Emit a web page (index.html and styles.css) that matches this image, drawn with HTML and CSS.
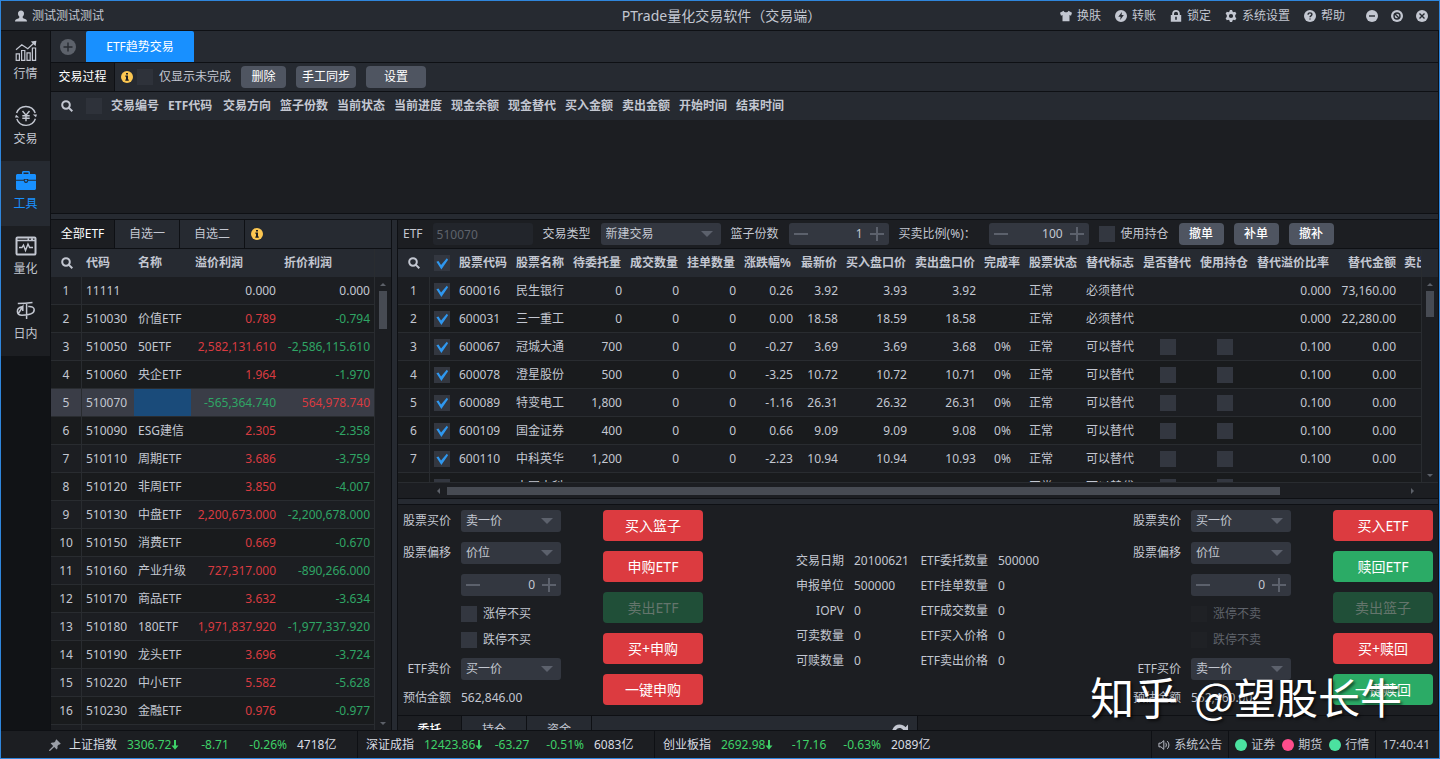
FILE: index.html
```html
<!DOCTYPE html>
<html lang="zh-CN">
<head>
<meta charset="utf-8">
<title>PTrade量化交易软件（交易端）</title>
<link rel="stylesheet" href="styles.css">
</head>
<body>
<svg class="defs" aria-hidden="true">
  <symbol id="i-user" viewBox="0 0 12 12"><path d="M6 .4c1.900 0 3 1.300 3 3.100 0 1.300-.5 2.400-1.300 3v1c0 .5.4.8 1 1 2 .6 3.300 1 3.300 2.900H0c0-1.900 1.300-2.300 3.300-2.900.6-.2 1-.5 1-1v-1C3.500 5.900 3 4.800 3 3.500 3 1.700 4.100.4 6 .4z"/></symbol>
  <symbol id="i-shirt" viewBox="0 0 12 12"><path d="M3.600.8 0 2.700l1 3 1.500-.6v6.100h7V5.100l1.500.6 1-3L8.400.8C8 1.800 7.200 2.300 6 2.300S4 1.800 3.600.8z"/></symbol>
  <symbol id="i-transfer" viewBox="0 0 12 12"><path fill-rule="evenodd" d="M6 0a6 6 0 1 0 0 12A6 6 0 0 0 6 0zm.9 2L6.600 5.100h2.200L5.200 10l.4-3.300H3.300z"/></symbol>
  <symbol id="i-lock" viewBox="0 0 12 12"><path fill-rule="evenodd" d="M2.200 5V3.800a3.800 3.800 0 0 1 7.600 0V5h1.400v6.800H.8V5zm1.800 0h4V3.800a2 2 0 0 0-4 0zm1.200 1.700v3h1.600v-3z"/></symbol>
  <symbol id="i-gear" viewBox="0 0 12 12"><path fill-rule="evenodd" d="M4.900 0h2.200l.4 1.600 1 .6 1.700-.5 1.200 2-1.200 1.200v2.200l1.200 1.200-1.200 2-1.700-.5-1 .6L7.100 12H4.900l-.4-1.600-1-.6-1.700.5-1.200-2 1.200-1.200V4.900L.6 3.700l1.200-2 1.700.5 1-.6zM6 3.900a2.100 2.100 0 1 0 0 4.200 2.100 2.100 0 0 0 0-4.200z"/></symbol>
  <symbol id="i-help" viewBox="0 0 12 12"><circle cx="6" cy="6" r="6"/><path class="cut" d="M4.100 4.700c0-1.200.8-1.800 1.900-1.800s1.900.7 1.900 1.700C7.900 5.900 6 5.900 6 7.200M6 8.400v1.200"/></symbol>
  <symbol id="i-min" viewBox="0 0 12 12"><circle cx="6" cy="6" r="6"/><path class="cut" d="M3 6h6"/></symbol>
  <symbol id="i-max" viewBox="0 0 12 12"><circle cx="6" cy="6" r="6"/><circle class="cut" cx="6" cy="6" r="3"/><path class="cut" d="m4 4 4 4"/></symbol>
  <symbol id="i-close" viewBox="0 0 12 12"><circle cx="6" cy="6" r="6"/><path class="cut" d="m3.500 3.500 5 5m0-5-5 5"/></symbol>
  <symbol id="i-search" viewBox="0 0 12 12"><path class="line" stroke-width="2" d="M5 1.200a3.800 3.800 0 1 1 0 7.600 3.800 3.800 0 0 1 0-7.600zm2.900 6.700 3.400 3.400"/></symbol>
  <symbol id="i-info" viewBox="0 0 12 12"><circle cx="6" cy="6" r="6"/><path class="ink" d="M5 2h2v1.600H5zM4.300 4.600H7V8.600h.8v1.200H4.300V8.600H5V5.800h-.7z"/></symbol>
  <symbol id="i-plus" viewBox="0 0 16 16"><circle cx="8" cy="8" r="8"/><path class="cut" stroke-width="2.600" d="M8 3.500v9M3.500 8h9"/></symbol>
  <symbol id="i-pin" viewBox="0 0 12 12"><path d="m7.300.2 4.500 4.500-1.200.8-.7-.1-1.500 1.500c.4 1.500.2 2.700-.7 3.500L5.200 7.900 1 11.900l-.9.1.1-.9 4-4.200L1.600 4.300c.8-.9 2-1.100 3.500-.7l1.500-1.500-.1-.7z"/></symbol>
  <symbol id="i-sound" viewBox="0 0 13 12"><path class="line" d="M1 4h2.200L6.300 1.300v9.400L3.200 8H1zM8.200 3.600c1.100 1.300 1.100 3.500 0 4.800M10 1.800c2.400 2.300 2.400 6.100 0 8.400"/></symbol>
  <symbol id="i-redo" viewBox="0 0 18 14"><path d="M0 12C1 5 4 1.500 8.500 1.500c2.500 0 4.500 1 6 2.700L17 1.500V9H9.500L12 6.600c-1-1.100-2.200-1.700-3.600-1.700C5.800 4.900 4 7.500 3.500 12z"/></symbol>
  <symbol id="i-down" viewBox="0 0 8 10"><path d="M3 0h2v5.500h2.500L4 9.800.5 5.500H3z"/></symbol>
  <symbol id="i-chart" viewBox="0 0 22 22"><path class="line" stroke-width="1.200" d="M1.200 20.300v-6.500h3.200v6.500zM6.600 20.300V10.500h3.200v9.800zM12 20.300v-7.500h3.200v7.500zM17.400 20.300V8h3.200v12.300zM1 9.800l5.800-5 6 4L19.500 2.500"/><path d="m15.800 1.400 5.600-.6-.8 5.400z"/></symbol>
  <symbol id="i-trade" viewBox="0 0 22 22"><path class="line" stroke-width="1.400" d="M1.600 8A9.900 9.900 0 0 1 20.200 8M20.400 13.800A9.900 9.900 0 0 1 1.800 14M7.500 6l3.500 4.200L14.500 6M11 10.200v6M7.300 10.800h7.400M7.300 13.300h7.400"/><path d="M17.800 9.400H22l-1 2.800zM4.200 12.600H0l1-2.800z"/></symbol>
  <symbol id="i-tools" viewBox="0 0 22 22"><path fill-rule="evenodd" d="M7 4V2.600C7 1.700 7.600 1 8.500 1h5c.9 0 1.500.7 1.500 1.600V4h4.500c.8 0 1.500.7 1.500 1.500V9.800h-7.800V9H8.800v.8H1V5.500C1 4.700 1.700 4 2.500 4zm1.500 0h5V2.400h-5zM1 10.700h7.800c.2 1.500 1 2.200 2.200 2.200s2-.7 2.200-2.200H21v7.800c0 .8-.7 1.500-1.500 1.500h-17c-.8 0-1.500-.7-1.500-1.500zM9.800 9.800h2.400v1.700H9.800z"/></symbol>
  <symbol id="i-quant" viewBox="0 0 22 22"><path class="line" stroke-width="2" d="M2.500 2.500h17c.6 0 1 .4 1 1v15c0 .6-.4 1-1 1h-17c-.6 0-1-.4-1-1v-15c0-.6.4-1 1-1z"/><path class="line" stroke-width="1.400" d="M1.500 5.500h19M4 12.500h3l1.500-2.500 2 5.500 2.500-6.500 1.600 3.500H18M12.500 4h1.500M16 4h2"/></symbol>
  <symbol id="i-intra" viewBox="0 0 22 22"><path class="line" stroke-width="1.500" d="M2.800 3.600C8 3.600 13 3.200 17.500 2.600M11.600 3.500V19M7.800 6.500C4 7 2.200 9 2.400 11.600c.2 2.400 2 3.600 4.600 3.600 6 0 12.200-1.200 12.200-5.400 0-2.300-2.400-3.600-6-3.300M3 14l4.800-7.500v4.600M7.800 6.500 4 8"/></symbol>
</svg>

<div class="window">
  <header class="titlebar">
    <div class="user"><svg class="ic"><use href="#i-user"/></svg>测试测试测试</div>
    <h1 class="app-title">PTrade量化交易软件（交易端）</h1>
    <div class="title-right">
      <button class="tbtn"><svg class="ic"><use href="#i-shirt"/></svg>换肤</button>
      <button class="tbtn"><svg class="ic"><use href="#i-transfer"/></svg>转账</button>
      <button class="tbtn"><svg class="ic"><use href="#i-lock"/></svg>锁定</button>
      <button class="tbtn"><svg class="ic"><use href="#i-gear"/></svg>系统设置</button>
      <button class="tbtn"><svg class="ic"><use href="#i-help"/></svg>帮助</button>
      <div class="winctl">
        <button class="tbtn" aria-label="最小化"><svg class="ic"><use href="#i-min"/></svg></button>
        <button class="tbtn" aria-label="还原"><svg class="ic"><use href="#i-max"/></svg></button>
        <button class="tbtn" aria-label="关闭"><svg class="ic"><use href="#i-close"/></svg></button>
      </div>
    </div>
  </header>

  <div class="body">
    <nav class="side">
      <a class="nav" href="#"><svg><use href="#i-chart"/></svg>行情</a>
      <a class="nav" href="#"><svg><use href="#i-trade"/></svg>交易</a>
      <a class="nav on" href="#"><svg><use href="#i-tools"/></svg>工具</a>
      <a class="nav" href="#"><svg><use href="#i-quant"/></svg>量化</a>
      <a class="nav" href="#"><svg><use href="#i-intra"/></svg>日内</a>
    </nav>

    <main class="main">
      <div class="doctabs">
        <button class="add" aria-label="新增"><svg><use href="#i-plus"/></svg></button>
        <button class="doctab">ETF趋势交易</button>
      </div>
      <div class="toolbar">
        <button class="tab on">交易过程</button>
        <svg class="ic info"><use href="#i-info"/></svg>
        <label class="check faint"><input type="checkbox">仅显示未完成</label>
        <button class="btn">删除</button>
        <button class="btn wide">手工同步</button>
        <button class="btn wide">设置</button>
      </div>
      <div class="process">
        <table class="grid">
          <colgroup><col class="w31"><col class="w25"><col class="w57"><col class="w55"><col class="w57"><col class="w57"><col class="w57"><col class="w57"><col class="w57"><col class="w57"><col class="w57"><col class="w57"><col class="w57"><col></colgroup>
          <thead><tr><th class="c"><svg class="ic"><use href="#i-search"/></svg></th><th class="faint"><input type="checkbox" aria-label="全选"></th><th>交易编号</th><th>ETF代码</th><th>交易方向</th><th>篮子份数</th><th>当前状态</th><th>当前进度</th><th>现金余额</th><th>现金替代</th><th>买入金额</th><th>卖出金额</th><th>开始时间</th><th>结束时间</th></tr></thead>
        </table>
      </div>
      <div class="hsplit"></div>

      <div class="lower">
        <section class="etfs">
          <div class="tabs">
            <button class="tab on">全部ETF</button><button class="tab">自选一</button><button class="tab">自选二</button>
            <svg class="ic info"><use href="#i-info"/></svg>
          </div>
          <div class="scrollbox">
            <table class="grid">
              <colgroup><col class="w31"><col class="w52"><col class="w57"><col class="w89"><col></colgroup>
              <thead><tr><th class="c"><svg class="ic"><use href="#i-search"/></svg></th><th>代码</th><th>名称</th><th>溢价利润</th><th>折价利润</th></tr></thead>
              <tbody>
              <tr><td>1</td><td>11111</td><td></td><td class="r">0.000</td><td class="r">0.000</td></tr>
              <tr><td>2</td><td>510030</td><td>价值ETF</td><td class="r up">0.789</td><td class="r dn">-0.794</td></tr>
              <tr><td>3</td><td>510050</td><td>50ETF</td><td class="r up">2,582,131.610</td><td class="r dn">-2,586,115.610</td></tr>
              <tr><td>4</td><td>510060</td><td>央企ETF</td><td class="r up">1.964</td><td class="r dn">-1.970</td></tr>
              <tr class="sel"><td>5</td><td>510070</td><td class="focus"></td><td class="r dn">-565,364.740</td><td class="r up">564,978.740</td></tr>
              <tr><td>6</td><td>510090</td><td>ESG建信</td><td class="r up">2.305</td><td class="r dn">-2.358</td></tr>
              <tr><td>7</td><td>510110</td><td>周期ETF</td><td class="r up">3.686</td><td class="r dn">-3.759</td></tr>
              <tr><td>8</td><td>510120</td><td>非周ETF</td><td class="r up">3.850</td><td class="r dn">-4.007</td></tr>
              <tr><td>9</td><td>510130</td><td>中盘ETF</td><td class="r up">2,200,673.000</td><td class="r dn">-2,200,678.000</td></tr>
              <tr><td>10</td><td>510150</td><td>消费ETF</td><td class="r up">0.669</td><td class="r dn">-0.670</td></tr>
              <tr><td>11</td><td>510160</td><td>产业升级</td><td class="r up">727,317.000</td><td class="r dn">-890,266.000</td></tr>
              <tr><td>12</td><td>510170</td><td>商品ETF</td><td class="r up">3.632</td><td class="r dn">-3.634</td></tr>
              <tr><td>13</td><td>510180</td><td>180ETF</td><td class="r up">1,971,837.920</td><td class="r dn">-1,977,337.920</td></tr>
              <tr><td>14</td><td>510190</td><td>龙头ETF</td><td class="r up">3.696</td><td class="r dn">-3.724</td></tr>
              <tr><td>15</td><td>510220</td><td>中小ETF</td><td class="r up">5.582</td><td class="r dn">-5.628</td></tr>
              <tr><td>16</td><td>510230</td><td>金融ETF</td><td class="r up">0.976</td><td class="r dn">-0.977</td></tr>
              <tr><td></td><td></td><td></td><td></td><td></td></tr>
              </tbody>
            </table>
            <div class="vbar"><div class="cap"></div><i class="tri t-up"></i><div class="thumb tall"></div><i class="tri t-down"></i></div>
          </div>
        </section>
        <div class="vsplit"></div>

        <section class="trade">
          <form class="params">
            <label for="etf">ETF</label><input class="text dim" id="etf" value="510070" disabled>
            <label for="kind">交易类型</label><span class="pick mid"><select id="kind"><option>新建交易</option></select></span>
            <label for="lots">篮子份数</label><span class="spin"><button type="button" class="minus" aria-label="减"></button><input id="lots" value="1"><button type="button" class="add-one" aria-label="加"></button></span>
            <label for="ratio" class="w80">买卖比例(%)：</label><span class="spin"><button type="button" class="minus" aria-label="减"></button><input id="ratio" value="100"><button type="button" class="add-one" aria-label="加"></button></span>
            <label class="check"><input type="checkbox">使用持仓</label>
            <button type="button" class="btn">撤单</button><button type="button" class="btn">补单</button><button type="button" class="btn">撤补</button>
          </form>

          <div class="scrollbox">
            <table class="grid">
              <colgroup><col class="w32"><col class="w25"><col class="w57"><col class="w57"><col class="w57"><col class="w57"><col class="w57"><col class="w57"><col class="w45"><col class="w69"><col class="w69"><col class="w45"><col class="w57"><col class="w57"><col class="w57"><col class="w57"><col class="w82"><col class="w65"><col></colgroup>
              <thead><tr><th class="c"><svg class="ic"><use href="#i-search"/></svg></th><th><input type="checkbox" checked aria-label="全选"></th><th>股票代码</th><th>股票名称</th><th>待委托量</th><th>成交数量</th><th>挂单数量</th><th>涨跌幅%</th><th>最新价</th><th>买入盘口价</th><th>卖出盘口价</th><th>完成率</th><th>股票状态</th><th>替代标志</th><th>是否替代</th><th>使用持仓</th><th>替代溢价比率</th><th class="r">替代金额</th><th>卖出数量</th></tr></thead>
              <tbody>
              <tr><td>1</td><td><input type="checkbox" checked aria-label="选择"></td><td>600016</td><td>民生银行</td><td class="r">0</td><td class="r">0</td><td class="r">0</td><td class="r">0.26</td><td class="r">3.92</td><td class="r">3.93</td><td class="r">3.92</td><td></td><td>正常</td><td>必须替代</td><td></td><td></td><td class="r">0.000</td><td class="r">73,160.00</td><td></td></tr>
              <tr><td>2</td><td><input type="checkbox" checked aria-label="选择"></td><td>600031</td><td>三一重工</td><td class="r">0</td><td class="r">0</td><td class="r">0</td><td class="r">0.00</td><td class="r">18.58</td><td class="r">18.59</td><td class="r">18.58</td><td></td><td>正常</td><td>必须替代</td><td></td><td></td><td class="r">0.000</td><td class="r">22,280.00</td><td></td></tr>
              <tr><td>3</td><td><input type="checkbox" checked aria-label="选择"></td><td>600067</td><td>冠城大通</td><td class="r">700</td><td class="r">0</td><td class="r">0</td><td class="r">-0.27</td><td class="r">3.69</td><td class="r">3.69</td><td class="r">3.68</td><td class="c">0%</td><td>正常</td><td>可以替代</td><td class="c"><input type="checkbox" aria-label="是否替代"></td><td class="c"><input type="checkbox" aria-label="使用持仓"></td><td class="r">0.100</td><td class="r">0.00</td><td></td></tr>
              <tr><td>4</td><td><input type="checkbox" checked aria-label="选择"></td><td>600078</td><td>澄星股份</td><td class="r">500</td><td class="r">0</td><td class="r">0</td><td class="r">-3.25</td><td class="r">10.72</td><td class="r">10.72</td><td class="r">10.71</td><td class="c">0%</td><td>正常</td><td>可以替代</td><td class="c"><input type="checkbox" aria-label="是否替代"></td><td class="c"><input type="checkbox" aria-label="使用持仓"></td><td class="r">0.100</td><td class="r">0.00</td><td></td></tr>
              <tr><td>5</td><td><input type="checkbox" checked aria-label="选择"></td><td>600089</td><td>特变电工</td><td class="r">1,800</td><td class="r">0</td><td class="r">0</td><td class="r">-1.16</td><td class="r">26.31</td><td class="r">26.32</td><td class="r">26.31</td><td class="c">0%</td><td>正常</td><td>可以替代</td><td class="c"><input type="checkbox" aria-label="是否替代"></td><td class="c"><input type="checkbox" aria-label="使用持仓"></td><td class="r">0.100</td><td class="r">0.00</td><td></td></tr>
              <tr><td>6</td><td><input type="checkbox" checked aria-label="选择"></td><td>600109</td><td>国金证券</td><td class="r">400</td><td class="r">0</td><td class="r">0</td><td class="r">0.66</td><td class="r">9.09</td><td class="r">9.09</td><td class="r">9.08</td><td class="c">0%</td><td>正常</td><td>可以替代</td><td class="c"><input type="checkbox" aria-label="是否替代"></td><td class="c"><input type="checkbox" aria-label="使用持仓"></td><td class="r">0.100</td><td class="r">0.00</td><td></td></tr>
              <tr><td>7</td><td><input type="checkbox" checked aria-label="选择"></td><td>600110</td><td>中科英华</td><td class="r">1,200</td><td class="r">0</td><td class="r">0</td><td class="r">-2.23</td><td class="r">10.94</td><td class="r">10.94</td><td class="r">10.93</td><td class="c">0%</td><td>正常</td><td>可以替代</td><td class="c"><input type="checkbox" aria-label="是否替代"></td><td class="c"><input type="checkbox" aria-label="使用持仓"></td><td class="r">0.100</td><td class="r">0.00</td><td></td></tr>
              <tr><td></td><td><input type="checkbox" aria-label="选择"></td><td></td><td>中国中科</td><td></td><td></td><td></td><td></td><td></td><td></td><td></td><td></td><td>正常</td><td>可以替代</td><td class="c"><input type="checkbox" aria-label="是否替代"></td><td class="c"><input type="checkbox" aria-label="使用持仓"></td><td></td><td></td><td></td></tr>
              </tbody>
            </table>
            <div class="vbar"><div class="cap"></div><i class="tri t-up"></i><div class="thumb short"></div><i class="tri t-down"></i></div>
          </div>
          <div class="hbar"><i class="tri t-left"></i><div class="track"><div class="hthumb"></div></div><i class="tri t-right"></i></div>
          <div class="hsplit"></div>

          <div class="order">
            <form class="side-form">
              <div class="fields">
                <label for="b1">股票买价</label><span class="pick"><select id="b1"><option>卖一价</option></select></span>
                <label for="b2">股票偏移</label><span class="pick"><select id="b2"><option>价位</option></select></span>
                <span class="spin c2"><button type="button" class="minus" aria-label="减"></button><input aria-label="偏移" value="0"><button type="button" class="add-one" aria-label="加"></button></span>
                <label class="check c2"><input type="checkbox">涨停不买</label>
                <label class="check c2"><input type="checkbox">跌停不买</label>
                <label for="b3">ETF卖价</label><span class="pick"><select id="b3"><option>买一价</option></select></span>
                <span class="lab">预估金额</span><output>562,846.00</output>
              </div>
              <div class="acts">
                <button type="button" class="act red">买入篮子</button>
                <button type="button" class="act red">申购ETF</button>
                <button type="button" class="act green" disabled>卖出ETF</button>
                <button type="button" class="act red">买+申购</button>
                <button type="button" class="act red">一键申购</button>
              </div>
            </form>
            <dl class="facts">
              <dt>交易日期</dt><dd>20100621</dd><dt>ETF委托数量</dt><dd>500000</dd>
              <dt>申报单位</dt><dd>500000</dd><dt>ETF挂单数量</dt><dd>0</dd>
              <dt>IOPV</dt><dd>0</dd><dt>ETF成交数量</dt><dd>0</dd>
              <dt>可卖数量</dt><dd>0</dd><dt>ETF买入价格</dt><dd>0</dd>
              <dt>可赎数量</dt><dd>0</dd><dt>ETF卖出价格</dt><dd>0</dd>
            </dl>
            <form class="side-form">
              <div class="fields">
                <label for="s1">股票卖价</label><span class="pick"><select id="s1"><option>买一价</option></select></span>
                <label for="s2">股票偏移</label><span class="pick"><select id="s2"><option>价位</option></select></span>
                <span class="spin c2"><button type="button" class="minus" aria-label="减"></button><input aria-label="偏移" value="0"><button type="button" class="add-one" aria-label="加"></button></span>
                <label class="check c2 off"><input type="checkbox" disabled>涨停不卖</label>
                <label class="check c2 off"><input type="checkbox" disabled>跌停不卖</label>
                <label for="s3">ETF买价</label><span class="pick"><select id="s3"><option>卖一价</option></select></span>
                <span class="lab">预估金额</span><output>562,460.00</output>
              </div>
              <div class="acts">
                <button type="button" class="act red">买入ETF</button>
                <button type="button" class="act green">赎回ETF</button>
                <button type="button" class="act green" disabled>卖出篮子</button>
                <button type="button" class="act red">买+赎回</button>
                <button type="button" class="act green">一键赎回</button>
              </div>
            </form>
          </div>
          <div class="peek">
            <div class="tabs half">
              <button class="tab on">委托</button><button class="tab">持仓</button><button class="tab">资金</button>
              <svg class="redo"><use href="#i-redo"/></svg>
            </div>
          </div>
        </section>
      </div>
    </main>
  </div>

  <footer class="status">
    <svg class="ic pin"><use href="#i-pin"/></svg>
    <div class="quote"><span>上证指数</span><b>3306.72<svg><use href="#i-down"/></svg></b><b class="mid">-8.71</b><b class="end">-0.26%</b><span>4718亿</span></div>
    <div class="quote"><span>深证成指</span><b>12423.86<svg><use href="#i-down"/></svg></b><b class="mid">-63.27</b><b class="end">-0.51%</b><span>6083亿</span></div>
    <div class="quote"><span>创业板指</span><b>2692.98<svg><use href="#i-down"/></svg></b><b class="mid">-17.16</b><b class="end">-0.63%</b><span>2089亿</span></div>
    <div class="links">
      <div class="cell"><svg class="ic"><use href="#i-sound"/></svg>系统公告</div>
      <div class="cell"><i class="dot"></i>证券<i class="dot pink"></i>期货<i class="dot"></i>行情</div>
      <div class="cell"><time>17:40:41</time></div>
    </div>
  </footer>
  <div class="watermark"><span class="brand">知乎</span><span>@望股长牛</span></div>
</div>
</body>
</html>
```
FILE: styles.css
```css
:root {
  --bg: #1c1e22;
  --panel: #262a31;
  --edge: #0e1014;
  --line: #292c30;
  --field: #333740;
  --text: #c3c7d1;
  --up: #d93b41;
  --down: #2fa565;
}
* { box-sizing: border-box; }
body {
  margin: 0;
  background: var(--bg);
  color: var(--text);
  font: 12px/18px "Noto Sans", "Noto Sans CJK SC", sans-serif;
}
button, input, select { font: inherit; color: inherit; border: 0; margin: 0; padding: 0; background: none; border-radius: 0; }
a { color: inherit; text-decoration: none; }
.defs { position: absolute; width: 0; height: 0; }
svg { fill: currentColor; flex: none; display: block; }
.ic { width: 12px; height: 12px; }
.cut { fill: none; stroke: var(--panel); stroke-width: 1.4; }
.line { fill: none; stroke: currentColor; }
.ink { fill: #1c1e22; }
.info { color: #fcc751; margin-left: 6px; }

.window {
  position: relative;
  height: 100vh;
  display: flex;
  flex-direction: column;
  border: 1px solid #2f86dc;
  overflow: hidden;
}

/* title bar */
.titlebar {
  display: grid;
  grid-template-columns: 1fr auto 1fr;
  align-items: center;
  height: 30px;
  padding: 1px 11px 0 14px;
  background: var(--panel);
  border-bottom: 1px solid var(--edge);
}
.user, .tbtn { display: flex; align-items: center; gap: 5px; }
.app-title { margin: 0; font-size: 14px; font-weight: 400; }
.title-right { display: flex; justify-content: flex-end; gap: 14px; }
.winctl { display: flex; gap: 13px; margin-left: 7px; }

.body { flex: 1; min-height: 0; display: flex; }

/* side navigation */
.side { width: 50px; background: #111316; border-right: 1px solid var(--edge); }
.nav {
  display: flex;
  flex-direction: column;
  align-items: center;
  gap: 3px;
  height: 65px;
  padding-top: 9px;
  background: var(--bg);
}
.nav svg { width: 22px; height: 22px; }
.nav.on { background: var(--panel); color: #1890ff; }

.main { flex: 1; min-width: 0; display: flex; flex-direction: column; border-right: 1px solid var(--edge); }
.doctabs { display: flex; height: 32px; background: var(--panel); border-bottom: 1px solid var(--edge); }
.add { width: 35px; color: #5d626b; display: flex; align-items: center; padding-left: 9px; }
.add svg { width: 16px; height: 16px; }
.doctab { width: 108px; background: #1890ff; color: #fff; border-radius: 2px 2px 0 0; }

.toolbar, .tabs { display: flex; align-items: center; height: 29px; background: var(--panel); border-bottom: 1px solid var(--edge); }
.tab { width: 65px; height: 28px; flex: none; border-right: 1px solid var(--edge); }
.tab.on { width: 64px; background: var(--bg); color: #fff; }
.btn { width: 45px; height: 22px; border-radius: 4px; background: #4f5561; color: #fff; }
.btn.wide { width: 60px; }
.toolbar .btn { margin-left: 10px; }
.toolbar .check { margin-left: 4px; }
.params .btn, .half .on { font-weight: 500; }

.check { display: flex; align-items: center; gap: 6px; white-space: nowrap; }
input[type="checkbox"] {
  appearance: none;
  display: block;
  width: 16px;
  height: 16px;
  background: var(--field);
}
.faint input[type="checkbox"] { background: #2e323a; }
input[type="checkbox"]:disabled { background: #1f2125; }
input[type="checkbox"]:checked::before {
  content: "";
  display: block;
  height: 16px;
  background: #2f97ee;
  clip-path: polygon(15% 42%, 28% 38%, 44% 62%, 80% 20%, 88% 30%, 46% 90%);
}
.off { color: #5f636b; }

/* data grids */
.grid { width: 100%; table-layout: fixed; border-collapse: separate; border-spacing: 0; }
.grid th, .grid td { height: 28px; padding: 0 4px; text-align: left; white-space: nowrap; overflow: hidden; }
.grid th { background: var(--panel); font-weight: 700; }
.grid td { border-bottom: 1px solid var(--line); }
.grid td:first-child { text-align: center; border-right: 1px solid var(--line); padding: 0; }
.grid tbody tr:nth-child(even) { background: #191b1d; }
.grid tbody tr:nth-child(odd) { background: var(--bg); }
.grid .r { text-align: right; }
.grid .c { text-align: center; }
.grid .c svg, .grid .c input { margin: 0 auto; }
.grid tbody tr.sel { background: #3a3d47; }
.grid .focus { background: #1a4b7a; }
.up { color: var(--up); }
.dn { color: var(--down); }
.w25 { width: 25px; } .w31 { width: 31px; } .w32 { width: 32px; } .w45 { width: 45px; }
.w52 { width: 52px; } .w55 { width: 55px; } .w57 { width: 57px; } .w65 { width: 65px; }
.w69 { width: 69px; } .w82 { width: 82px; } .w89 { width: 89px; }

.process { height: 121px; }
.hsplit { height: 7px; flex: none; background: var(--panel); border: solid var(--edge); border-width: 1px 0; }
.vsplit { width: 7px; flex: none; background: var(--panel); border: solid var(--edge); border-width: 0 1px; }
.lower { flex: 1; min-height: 0; display: flex; }
.etfs { width: 340px; display: flex; flex-direction: column; }
.trade { flex: 1; min-width: 0; display: flex; flex-direction: column; }
.scrollbox { flex: 1; min-height: 0; display: flex; align-items: flex-start; overflow: hidden; }
.scrollbox .grid { flex: 1; min-width: 0; }

/* scroll bars */
.vbar { width: 17px; flex: none; align-self: stretch; display: flex; flex-direction: column; align-items: center; padding-bottom: 5px; border-left: 1px solid var(--line); }
.cap { width: 17px; height: 28px; background: var(--panel); flex: none; }
.thumb { width: 8px; background: #474b53; margin-top: 5px; }
.tall { height: 38px; }
.short { height: 26px; }
.tri { flex: none; border: 3px solid transparent; }
.t-up { border-bottom-color: #5c6068; margin-top: 6px; border-top-width: 0; }
.t-down { border-top-color: #5c6068; border-bottom-width: 0; margin-top: auto; }
.t-left { border-right-color: #5c6068; border-left-width: 0; }
.t-right { border-left-color: #5c6068; border-right-width: 0; }
.hbar { display: flex; align-items: center; height: 16px; flex: none; gap: 7px; padding: 0 24px 0 39px; border-top: 1px solid var(--line); }
.track { flex: 1; }
.hthumb { width: 87%; height: 8px; background: #474b53; }

/* form controls */
.params { display: flex; align-items: center; gap: 10px; height: 29px; padding: 0 5px; border-bottom: 1px solid var(--edge); white-space: nowrap; }
.w80 { width: 80px; }
.text, .spin { width: 100px; height: 22px; background: var(--field); border-radius: 3px; }
.dim { background: #22252b; color: #5f636b; padding: 0 4px; }
.pick { position: relative; width: 100px; height: 22px; }
.pick.mid { width: 120px; }
.pick select { appearance: none; width: 100%; height: 22px; padding: 0 5px; background: var(--field); border-radius: 3px; }
.pick::after { content: ""; position: absolute; right: 8px; top: 8px; border: 6px solid transparent; border-top-color: #5c616c; border-bottom-width: 0; pointer-events: none; }
.spin { display: flex; align-items: center; padding: 0 5px; }
.spin input { flex: 1; min-width: 0; text-align: right; padding-right: 7px; }
.minus, .add-one { width: 14px; height: 14px; flex: none; background: linear-gradient(#5c616c, #5c616c) center / 14px 2px no-repeat; }
.add-one { background: linear-gradient(#5c616c, #5c616c) center / 14px 2px no-repeat, linear-gradient(#5c616c, #5c616c) center / 2px 14px no-repeat; }

.order { display: flex; flex: none; justify-content: space-between; padding: 5px 5px 9px; height: 210px; }
.side-form { display: flex; gap: 42px; }
.fields { display: grid; grid-template-columns: 48px 100px; grid-template-rows: 22px 22px 22px 16px 16px 22px 16px; gap: 10px; align-items: center; }
.fields > label:not(.check), .lab { text-align: right; white-space: nowrap; }
.c2 { grid-column: 2; }
.acts { display: flex; flex-direction: column; gap: 10px; }
.act { width: 100px; height: 31px; border-radius: 4px; font-size: 14px; color: #fff; }
.red { background: #dc3b40; }
.green { background: #2bab66; }
.green:disabled { background: #204f38; color: #64756c; }
.facts { display: grid; grid-template-columns: 48px 56px 68px 42px; column-gap: 10px; margin: 0; padding-top: 38px; line-height: 25px; grid-auto-rows: 25px; white-space: nowrap; }
.facts dt { text-align: right; }
.facts dd { margin: 0; }

.peek { height: 15px; flex: none; overflow: hidden; border-top: 1px solid var(--edge); }
.half { width: 50%; border-right: 1px solid var(--edge); }
.redo { width: 18px; height: 14px; margin: 0 8px 0 auto; }

/* status bar */
.status { display: flex; align-items: center; height: 28px; border-top: 1px solid var(--edge); color: #d9dce3; padding-left: 48px; }
.pin { color: #9a9ea6; margin-right: 8px; }
.quote { display: grid; grid-template-columns: 48px 61px 34px 45px 60px; column-gap: 10px; width: 297px; align-items: center; line-height: 27px; white-space: nowrap; }
.quote + .quote { border-left: 1px solid var(--edge); padding-left: 8px; margin-left: -9px; width: 306px; }
.quote b { font-weight: 400; color: #3fd168; display: flex; align-items: center; }
.quote b svg { width: 8px; height: 10px; }
.quote .mid { justify-content: center; }
.quote .end { justify-content: flex-end; }
.links { display: flex; margin-left: auto; color: var(--text); }
.cell { display: flex; align-items: center; gap: 4px; height: 27px; padding: 0 6px; border-left: 1px solid var(--edge); }
.cell:last-child { padding-right: 9px; }
.dot { width: 12px; height: 12px; border-radius: 50%; background: #4be2a0; }
.dot:not(:first-child) { margin-left: 3px; }
.pink { background: #ff4d8d; }

.watermark {
  position: absolute;
  right: 37px;
  bottom: 32px;
  display: flex;
  align-items: center;
  gap: 16px;
  font: 42px/60px "Noto Sans CJK SC", sans-serif;
  color: #fff;
  text-shadow: 2px 2px 3px rgba(0, 0, 0, .6);
  pointer-events: none;
}
.brand { font-size: 44px; }
```
